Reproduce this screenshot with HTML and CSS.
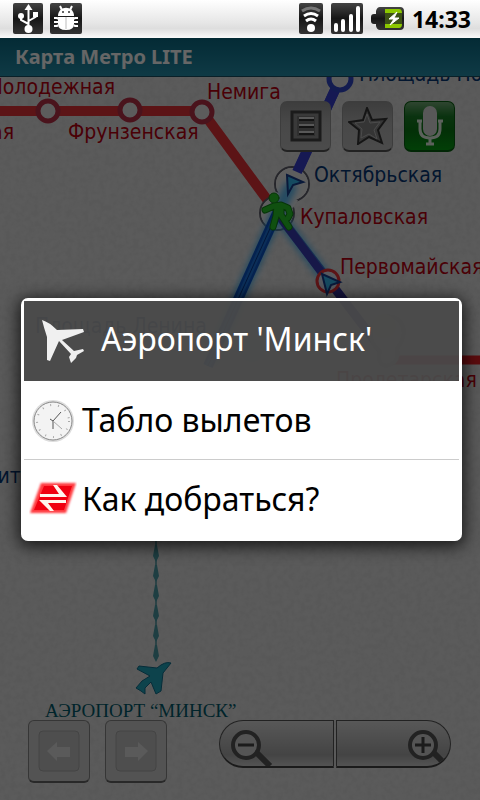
FILE: index.html
```html
<!DOCTYPE html>
<html lang="ru">
<head>
<meta charset="utf-8">
<meta name="viewport" content="width=device-width, initial-scale=1">
<title>Карта Метро LITE</title>
<link rel="stylesheet" href="styles.css">
</head>
<body>
<header class="status">
  <div class="status-group">
    <svg width="30" height="32" viewBox="0 0 30 32" aria-hidden="true">
      <rect width="30" height="31" rx="2" fill="url(#chip)"/>
      <g fill="none" stroke="#fff" stroke-width="2"><path d="M15.500 5v20M15.500 21L8 17v-4M15.500 18l7-4v-3"/></g>
      <path d="M15.500 1l4 6h-8z" fill="#fff"/><circle cx="15.500" cy="26" r="4" fill="#fff"/><circle cx="8" cy="13" r="3" fill="#fff"/><rect x="20" y="9" width="5" height="5" fill="#fff"/>
    </svg>
    <svg width="32" height="32" viewBox="0 0 32 32" aria-hidden="true">
      <defs><linearGradient id="chip" x1="0" y1="0" x2="0" y2="1"><stop offset="0" stop-color="#444"/><stop offset=".5" stop-color="#161616"/><stop offset="1" stop-color="#333"/></linearGradient></defs>
      <rect width="32" height="31" rx="2" fill="url(#chip)"/>
      <path d="M8 13c0-11 16-11 16 0z" fill="#fff"/><path d="M8 14h16v7q0 6-8 6t-8-6z" fill="#fff"/>
      <path d="M12 7l-2-4M20 7l2-4M4 15h3l1 1M4 19h4M4 23h3l1-1M28 15h-3l-1 1M28 19h-4M28 23h-3l-1-1" stroke="#fff" stroke-width="2" fill="none"/>
      <path d="M16 14v12" stroke="#bbb"/><circle cx="13" cy="9" r="1" fill="#333"/><circle cx="19" cy="9" r="1" fill="#333"/>
    </svg>
  </div>
  <div class="status-group status-right">
    <svg width="24" height="32" viewBox="0 0 24 32" aria-hidden="true">
      <rect width="24" height="31" rx="2" fill="url(#chip)"/>
      <g fill="none" stroke="#fff" stroke-width="3"><path d="M3 8q9-6 18 0" stroke="#777"/><path d="M5 13q7-5 14 0"/><path d="M7 18q5-4 10 0"/></g><circle cx="12" cy="25" r="4" fill="#fff"/>
    </svg>
    <svg width="32" height="32" viewBox="0 0 32 32" aria-hidden="true">
      <rect width="32" height="31" rx="2" fill="url(#chip)"/>
      <path d="M5 27v-5M12 27v-9M20 27V13M27 27V5" stroke="#fff" stroke-width="4" stroke-linecap="round"/>
    </svg>
    <svg width="33" height="32" viewBox="0 0 33 32" aria-hidden="true">
      <path d="M9 4h20q4 0 4 4v15q0 4-4 4H9q-3 0-4-4v-2H3q-3 0-3-3v-4q0-3 3-3h2V8q1-4 4-4z" fill="url(#chip)"/>
      <path d="M14 6h14q3 0 3 4H14zM14 21h17q0 4-3 4H14z" fill="#8cc800"/><path d="M14 10h17v11H14z" fill="#3d5216"/>
      <path d="M26 9l-8 7h5l-4 6 9-7h-5z" fill="#fff" stroke="#fff"/>
    </svg>
    <time class="clock">14:33</time>
  </div>
</header>
<div class="screen">
  <h1 class="titlebar">Карта Метро LITE</h1>
  <main class="map">
    <svg class="map-canvas" viewBox="0 77 480 723" preserveAspectRatio="xMidYMin slice" role="img" aria-label="Схема метро">
      <defs>
        <filter id="paper" x="0" y="0" width="100%" height="100%"><feTurbulence type="fractalNoise" baseFrequency=".18" numOctaves="3" seed="4"/><feColorMatrix values="0 0 0 0 0  0 0 0 0 0  0 0 0 0 0  .35 0 0 0 -.1"/></filter>
        <filter id="glow" filterUnits="userSpaceOnUse" x="150" y="150" width="250" height="240"><feGaussianBlur stdDeviation="3"/></filter>
      </defs>
      <rect y="77" width="480" height="723" fill="#e4e4e4"/>
      <rect y="77" width="480" height="723" filter="url(#paper)" opacity=".22"/>
      <path d="M340 79L292 184" stroke="#3840cf" stroke-width="10"/>
      <path d="M0 111h202L277 213" fill="none" stroke="#e63237" stroke-width="10"/>
      <path d="M388 360h92" stroke="#e61e25" stroke-width="9"/>
      <g fill="#ececec" stroke="#60606c" stroke-width="2"><circle cx="292" cy="184" r="17"/><circle cx="277" cy="213" r="17"/></g>
      <g fill="#ececec"><circle cx="292" cy="184" r="16"/><circle cx="277" cy="213" r="16"/><path d="M276 192l22 8-5 8-22-8z"/></g>
      <path d="M340 79L297 172" stroke="#3840cf" stroke-width="10"/>
      <path d="M277 213L388 358" stroke="#36349f" stroke-width="9"/>
      <path d="M292 184L277 213L210 362" fill="none" stroke="#38aef5" stroke-width="13" filter="url(#glow)" opacity=".8"/>
      <path d="M277 213L328 281" stroke="#38aef5" stroke-width="13" filter="url(#glow)" opacity=".7"/>
      <path d="M277 213L208 366" stroke="#0c55c8" stroke-width="10"/>
      <path d="M277 213L208 366" stroke="#1c74dd" stroke-width="5"/><path d="M277 213L208 366" stroke="#08378c" stroke-width="1"/>
      <path d="M277 213L328 281" stroke="#3a3cb4" stroke-width="8"/>
      <g fill="#e6e6e6" stroke="#b83048" stroke-width="5"><circle cx="48" cy="111" r="10"/><circle cx="130" cy="110" r="10"/><circle cx="202" cy="112" r="10"/></g>
      <circle cx="340" cy="79" r="11" fill="#e6e6e6" stroke="#3048c8" stroke-width="5"/>
      <path d="M287 175l16 7-10 3-5 9z" fill="#35baf0" stroke="#173f90" stroke-width="2"/>
      <g fill="none" stroke-linecap="round" stroke-linejoin="round">
        <path d="M265 210l9-4 7-1 7 3 2 6-2 4M277 206l-1 10-3 11M281 206l0 9 8 12" stroke="#128418" stroke-width="7"/>
        <circle cx="274" cy="198" r="5" fill="#28c928" stroke="#128418"/>
        <path d="M265 210l9-4 7-1 7 3 2 6-2 4M277 206l-1 10-3 11M281 206l0 9 8 12M279 207v7" stroke="#28c928" stroke-width="5"/>
      </g>
      <circle cx="328" cy="281" r="11" fill="#d7dfec" stroke="#e63237" stroke-width="3"/>
      <path d="M322 274l18 8-9 3-4 9z" fill="#35baf0" stroke="#173f90" stroke-width="2"/>
      <path d="M386 366q-10-3-6-15-13-10-8-24 10-16 26-8 12 12-1 30 3 14-11 17z" fill="#dedede" stroke="#aaa" stroke-width="4"/><circle cx="384" cy="326" r="12" fill="#d4cfb4"/>
      <circle cx="252" cy="350" r="12" fill="#a0c2d8" opacity=".6"/>
      <path d="M156 541v119" stroke="#72a9b0" stroke-width="2"/>
      <path d="M155 545h2l2 11-3 6-3-6zM155 565h2l2 11-3 6-3-6zM155 585h2l2 11-3 6-3-6zM155 605h2l2 11-3 6-3-6zM155 625h2l2 11-3 6-3-6zM155 645h2l2 11-3 6-3-6z" fill="#4b9ca6"/>
      <path d="M171 663l-8 10-2 18-5 3-5-12-6 6v6l-4-3-5-3 6-7 8-5-13-7 2-3 18 2q8-7 14-5z" fill="#22a8be" stroke="#116f8e" stroke-width="1"/>
      <g class="red-label"><text x="115" y="94" text-anchor="end">Молодежная</text><text x="14" y="139" text-anchor="end">Спортивная</text><text x="68" y="139">Фрунзенская</text><text x="207" y="99">Немига</text><text x="300" y="224">Купаловская</text><text x="340" y="274">Первомайская</text><text x="336" y="387">Пролетарская</text></g>
      <g class="blue-label"><text x="359" y="81">Площадь Победы</text><text x="314" y="182">Октябрьская</text><text x="35" y="333">Площадь Ленина</text><text x="43" y="483" text-anchor="end">Институт</text></g>
      <text class="airport-label" x="45" y="717">АЭРОПОРТ “МИНСК”</text>
    </svg>
    <div class="tools">
      <button class="tool" aria-label="Список"><svg width="32" height="32" viewBox="0 0 32 32"><path d="M2 2h28v28H2z" fill="#909090" stroke="#444" stroke-width="3"/><path d="M7 6h18v20H7z" fill="#777"/><path d="M9 9h15M9 16h15M9 23h15" stroke="#ddd" stroke-width="4"/><path d="M9 10h15M9 17h15M9 24h15" stroke="#333" stroke-width="2"/></svg></button>
      <button class="tool" aria-label="Избранное"><svg width="40" height="38" viewBox="0 0 40 38"><path d="M19 1l5 12 14-1-8 11 4 13-13-6-11 7 1-14L1 15l14-2z" fill="#888" stroke="#363636" stroke-width="2"/><path d="M19 7l3 9 10-1-6 8 3 9-8-5-8 4 1-9-7-6 9-1z" fill="#858585" stroke="#bbb" stroke-width="1"/></svg></button>
      <button class="tool tool-voice" aria-label="Голос"><svg width="28" height="40" viewBox="0 0 28 40"><rect x="7" y="0" width="14" height="30" rx="7" fill="#ddd"/><path d="M4 16v7q0 9 10 9t10-9v-7" fill="none" stroke="#e5f3e5" stroke-width="3"/><path d="M1 15h5M22 15h5M14 32v7M10 38h8" stroke="#e5f3e5" stroke-width="3"/></svg></button>
    </div>
    <div class="controls">
      <div class="history">
        <button class="step" aria-label="Назад"><svg width="42" height="42" viewBox="0 0 42 42"><rect x="1" y="1" width="40" height="40" rx="4" fill="#c3c3c3" stroke="#aaa"/><path d="M9 21l10-9v5h13v10H19v4z" fill="#e0e0e0"/></svg></button>
        <button class="step" aria-label="Вперёд"><svg width="42" height="42" viewBox="0 0 42 42"><rect x="1" y="1" width="40" height="40" rx="4" fill="#c3c3c3" stroke="#aaa"/><path d="M33 21l-10-9v5H10v10h13v4z" fill="#e0e0e0"/></svg></button>
      </div>
      <div class="zoom">
        <button class="zoom-out" aria-label="Уменьшить"><svg width="44" height="46" viewBox="0 0 44 46"><path d="M25 31l14 14" stroke="#555" stroke-width="6"/><circle cx="15" cy="24" r="13" fill="#d2d2d2" stroke="#555" stroke-width="4"/><path d="M7 24h16" stroke="#444" stroke-width="3"/></svg></button>
        <button class="zoom-in" aria-label="Увеличить"><svg width="42" height="46" viewBox="0 0 42 46"><path d="M25 31l14 14" stroke="#555" stroke-width="6"/><circle cx="15" cy="24" r="13" fill="#d2d2d2" stroke="#555" stroke-width="4"/><path d="M7 24h16M15 16v16" stroke="#444" stroke-width="3"/></svg></button>
      </div>
    </div>
  </main>
  <div class="scrim">
    <section class="dialog" role="dialog" aria-labelledby="dialog-title">
      <div class="dialog-head">
        <svg width="44" height="44" viewBox="0 0 44 44" aria-hidden="true"><path d="M1 1q7 2 15 10l26-1 1 3-22 8 12 11 9-2 1 2-7 4-1 3-5 5-2-6 2-3-12-13-9 20-3-1V18Q3 9 1 1z" fill="#f0f0f0"/></svg>
        <h2 id="dialog-title">Аэропорт 'Минск'</h2>
      </div>
      <button class="item">
        <svg width="48" height="48" viewBox="0 0 48 48" aria-hidden="true"><circle cx="24" cy="25" r="21" fill="#ddd"/><circle cx="24" cy="25" r="19" fill="#f3f3f3" stroke="#888" stroke-width="1"/><circle cx="24" cy="25" r="16" fill="none" stroke="#aaa" stroke-width="2" stroke-dasharray="1 7"/><path d="M21 23l3 2 8-9M24 25v8" fill="none" stroke="#555" stroke-width="1"/><path d="M24 25l9 8" stroke="#aaa"/></svg>
        <span>Табло вылетов</span>
      </button>
      <button class="item">
        <svg width="48" height="48" viewBox="0 0 48 48" aria-hidden="true"><defs><filter id="soft"><feGaussianBlur stdDeviation="1"/></filter></defs><path d="M12 8h35L37 38H1z" fill="#ff3b40" filter="url(#soft)"/><path d="M15 11h28l-8 24H5z" fill="#f00010"/><path d="M11 19h19l-6-9h4l10 12H11zM37 25H10l11 11h4l-6-8h18z" fill="#fff4ec"/></svg>
        <span>Как добраться?</span>
      </button>
    </section>
  </div>
</div>
</body>
</html>
```
FILE: styles.css
```css
* { box-sizing: border-box; }

body {
  margin: 0;
  min-height: 100vh;
  display: flex;
  flex-direction: column;
  overflow-x: hidden;
  font-family: "Noto Sans", "Open Sans", sans-serif;
}

button {
  margin: 0;
  padding: 0;
  border: 0;
  font: inherit;
  color: inherit;
}

.status {
  height: 38px;
  padding: 0 9px 0 13px;
  display: flex;
  align-items: center;
  justify-content: space-between;
  background: linear-gradient(#fff, #e6e6e6 60%, #dedede 75%, #fafafa);
}

.status-group {
  display: flex;
  align-items: center;
  gap: 7px;
}

.status-right { gap: 8px; }
.status svg { display: block; }

.clock {
  font-size: 23px;
  line-height: 32px;
  font-weight: 700;
}

.screen {
  position: relative;
  flex: 1;
  display: flex;
  flex-direction: column;
}

.titlebar {
  margin: 0;
  padding: 0 15px;
  font-size: 20px;
  line-height: 38px;
  color: #fff;
  background: linear-gradient(#0b6b85, #2691ad);
  border-bottom: 1px solid #175264;
}

.map {
  position: relative;
  flex: 1;
  display: flex;
  flex-direction: column;
  justify-content: space-between;
  overflow: hidden;
}

.map-canvas {
  position: absolute;
  inset: 0;
  width: 100%;
  height: 100%;
}

.red-label,
.blue-label {
  font-family: "DejaVu Sans Condensed", "DejaVu Sans", sans-serif;
  font-size: 21px;
  fill: #b90010;
}

.blue-label { fill: #073777; }

.airport-label {
  font-family: "Liberation Serif", serif;
  font-size: 19px;
  fill: #005b6b;
}

.tools {
  position: relative;
  display: flex;
  justify-content: flex-end;
  gap: 11px;
  padding: 24px 25px 0;
}

.tool {
  width: 51px;
  height: 51px;
  display: grid;
  place-items: center;
  border: 1px solid #999;
  border-bottom: 2px solid #555;
  border-radius: 7px;
  background: linear-gradient(#999, #b5b5b5 45%, #bcbcbc);
}

.tool-voice {
  border-color: #07600f;
  background: linear-gradient(#75ad79, #1b7f28 30%, #087812 60%, #079e13);
}

.controls {
  position: relative;
  display: flex;
  justify-content: space-between;
  align-items: flex-start;
  padding: 0 29px 17px 28px;
}

.history {
  display: flex;
  gap: 15px;
}

.step {
  width: 62px;
  height: 63px;
  display: grid;
  place-items: center;
  border: 1px solid #888;
  border-bottom: 2px solid #666;
  border-radius: 6px;
  background: #cfcfcf;
}

.zoom {
  display: flex;
  gap: 2px;
}

.zoom button {
  width: 115px;
  height: 48px;
  display: flex;
  align-items: center;
  overflow: hidden;
  padding: 0 11px;
  border: 1px solid #555;
  border-bottom: 2px solid #444;
  background: linear-gradient(#dcdcdc, #aaa 75%, #d0d0d0);
}

.zoom .zoom-out { border-radius: 24px 0 0 24px; }

.zoom .zoom-in {
  justify-content: flex-end;
  padding: 0;
  border-radius: 0 24px 24px 0;
}

.scrim {
  position: absolute;
  inset: 0;
  display: flex;
  align-items: center;
  padding: 0 18px 0 21px;
  background: rgba(0, 0, 0, 0.6);
}

.dialog {
  width: 100%;
  border: 3px solid #fff;
  border-radius: 7px;
  box-shadow: 0 3px 16px 3px rgba(0, 0, 0, 0.7);
}

.dialog-head {
  height: 80px;
  display: flex;
  align-items: center;
  gap: 16px;
  padding: 0 17px;
  color: #fff;
  background: rgba(74, 74, 74, 0.93);
}

.dialog-head h2 {
  margin: 0;
  padding-bottom: 4px;
  font-size: 32px;
  line-height: 44px;
  font-weight: 400;
}

.item {
  width: 100%;
  height: 78px;
  display: flex;
  align-items: center;
  gap: 5px;
  padding: 0 5px;
  font-size: 32px;
  line-height: 44px;
  color: #000;
  background: #fff;
}

.item + .item {
  height: 79px;
  border-top: 1px solid #ccc;
}
```
